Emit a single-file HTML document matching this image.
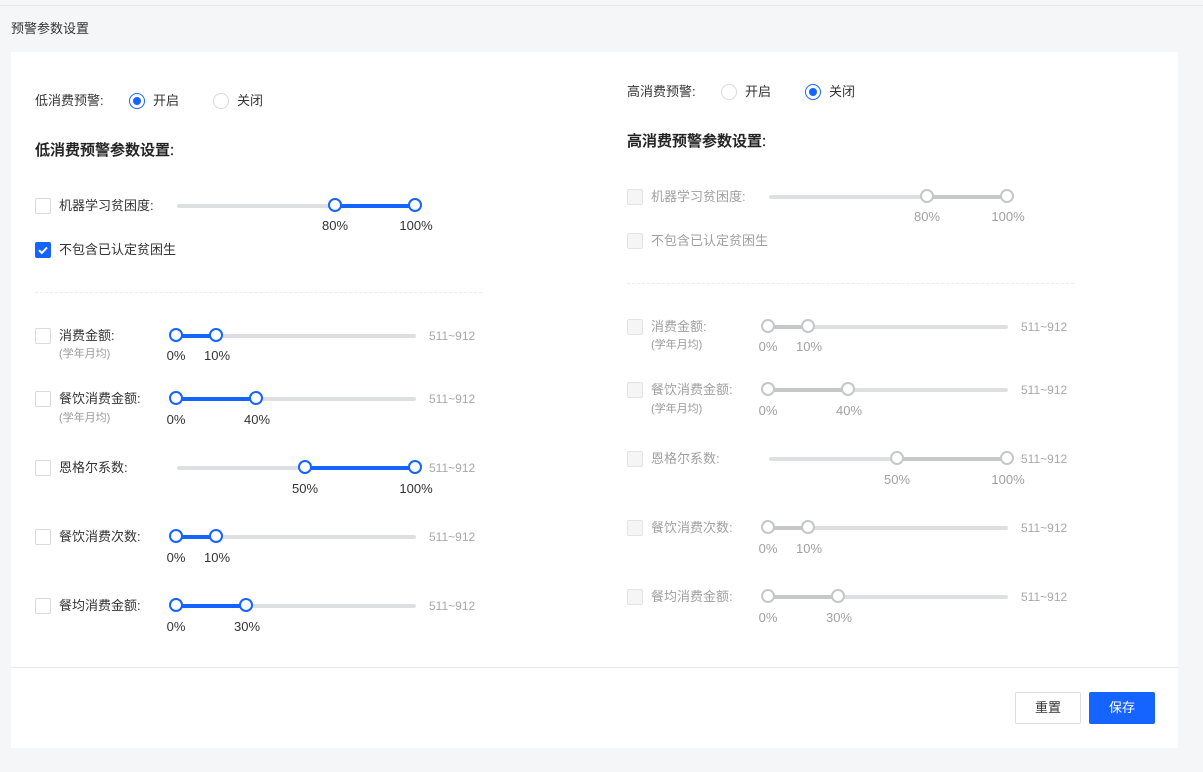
<!DOCTYPE html>
<html><head><meta charset="utf-8">
<style>
*{margin:0;padding:0;box-sizing:border-box}
body{width:1203px;height:772px;background:#f5f6f8;font-family:"Liberation Sans","Noto Sans CJK SC",sans-serif;position:relative;overflow:hidden;color:#333}
.a{position:absolute;white-space:nowrap}
.t{font-size:13px;line-height:18px}
.card{position:absolute;left:11px;top:52px;width:1167px;height:696px;background:#fff}
.tr{position:absolute;height:4px;border-radius:2px;background:#dedfe2}
.f{position:absolute;height:4px;background:#1664ff}
.th{position:absolute;width:14px;height:14px;margin-left:-1px;margin-top:-1px;border:2px solid #1664ff;border-radius:50%;background:#fff}
.p{position:absolute;width:60px;text-align:center;font-size:13px;line-height:16px;color:#333;margin-top:1px}
.cb{position:absolute;width:16px;height:16px;border:1px solid #d9d9d9;border-radius:2px;background:#fff}
.r .cb{background:#f5f5f5;border-color:#e3e3e3}
.r .f{background:#c6c7ca}
.r .th{border-color:#c6c7ca}
.r .p,.r .t{color:#a0a0a0}
.rng{position:absolute;font-size:12px;color:#a8a8a8;line-height:16px}
.sub{position:absolute;font-size:11px;color:#999;line-height:14px}
.rad{position:absolute;width:16px;height:16px;border-radius:50%;border:1px solid #d9d9d9;background:#fff}
.rad.on{border-color:#1664ff}
.rad.on:after{content:"";position:absolute;left:3px;top:3px;width:8px;height:8px;border-radius:50%;background:#1664ff}
.h{position:absolute;font-size:15px;font-weight:500;line-height:20px;color:#222;white-space:nowrap;-webkit-text-stroke:0.3px #222}
</style></head><body>
<div class="a" style="left:0;top:5px;width:1203px;height:1px;background:#e6e7ea"></div>
<div class="a t" style="left:11px;top:20px;color:#333">预警参数设置</div>
<div class="card"></div>
<div class="a" style="left:11px;top:667px;width:1167px;height:1px;background:#e8e9ec"></div>
<div class="a" style="left:1015px;top:692px;width:66px;height:32px;border:1px solid #dcdde0;border-radius:2px;background:#fff;font-size:13px;line-height:30px;text-align:center;color:#333">重置</div>
<div class="a" style="left:1089px;top:692px;width:66px;height:32px;border-radius:2px;background:#1664ff;font-size:13px;line-height:32px;text-align:center;color:#fff">保存</div>

<!-- LEFT -->
<div>
<div class="a t" style="left:35px;top:92px">低消费预警:</div>
<div class="rad on" style="left:129px;top:93px"></div>
<div class="a t" style="left:153px;top:92px">开启</div>
<div class="rad" style="left:213px;top:93px"></div>
<div class="a t" style="left:237px;top:92px">关闭</div>
<div class="h" style="left:35px;top:141px">低消费预警参数设置:</div>

<div class="cb" style="left:35px;top:198px"></div>
<div class="a t" style="left:59px;top:197px">机器学习贫困度:</div>
<div class="tr" style="left:177px;top:204px;width:239px"></div>
<div class="f" style="left:336px;top:204px;width:80px"></div>
<div class="th" style="left:329px;top:199px"></div><div class="th" style="left:409px;top:199px"></div>
<div class="p" style="left:305px;top:217px">80%</div><div class="p" style="left:386px;top:217px">100%</div>

<div class="cb" style="left:35px;top:242px;background:#1664ff;border-color:#1664ff"><svg width="14" height="14" viewBox="0 0 14 14" style="position:absolute;left:0;top:0"><path d="M3 7.2l2.8 2.8L11 4.5" stroke="#fff" stroke-width="2" fill="none"/></svg></div>
<div class="a t" style="left:59px;top:241px">不包含已认定贫困生</div>
<div class="a" style="left:35px;top:292px;width:447px;border-top:1px dashed #ececee"></div>

<div class="cb" style="left:35px;top:328px"></div>
<div class="a t" style="left:59px;top:327px">消费金额:</div>
<div class="sub" style="left:59px;top:347px">(学年月均)</div>
<div class="tr" style="left:177px;top:334px;width:239px"></div>
<div class="f" style="left:177px;top:334px;width:40px"></div>
<div class="th" style="left:170px;top:329px"></div><div class="th" style="left:210px;top:329px"></div>
<div class="p" style="left:146px;top:347px">0%</div><div class="p" style="left:187px;top:347px">10%</div>
<div class="rng" style="left:429px;top:328px">511~912</div>

<div class="cb" style="left:35px;top:391px"></div>
<div class="a t" style="left:59px;top:390px">餐饮消费金额:</div>
<div class="sub" style="left:59px;top:411px">(学年月均)</div>
<div class="tr" style="left:177px;top:397px;width:239px"></div>
<div class="f" style="left:177px;top:397px;width:80px"></div>
<div class="th" style="left:170px;top:392px"></div><div class="th" style="left:250px;top:392px"></div>
<div class="p" style="left:146px;top:411px">0%</div><div class="p" style="left:227px;top:411px">40%</div>
<div class="rng" style="left:429px;top:391px">511~912</div>

<div class="cb" style="left:35px;top:460px"></div>
<div class="a t" style="left:59px;top:459px">恩格尔系数:</div>
<div class="tr" style="left:177px;top:466px;width:239px"></div>
<div class="f" style="left:306px;top:466px;width:110px"></div>
<div class="th" style="left:299px;top:461px"></div><div class="th" style="left:409px;top:461px"></div>
<div class="p" style="left:275px;top:480px">50%</div><div class="p" style="left:386px;top:480px">100%</div>
<div class="rng" style="left:429px;top:460px">511~912</div>

<div class="cb" style="left:35px;top:529px"></div>
<div class="a t" style="left:59px;top:528px">餐饮消费次数:</div>
<div class="tr" style="left:177px;top:535px;width:239px"></div>
<div class="f" style="left:177px;top:535px;width:40px"></div>
<div class="th" style="left:170px;top:530px"></div><div class="th" style="left:210px;top:530px"></div>
<div class="p" style="left:146px;top:549px">0%</div><div class="p" style="left:187px;top:549px">10%</div>
<div class="rng" style="left:429px;top:529px">511~912</div>

<div class="cb" style="left:35px;top:598px"></div>
<div class="a t" style="left:59px;top:597px">餐均消费金额:</div>
<div class="tr" style="left:177px;top:604px;width:239px"></div>
<div class="f" style="left:177px;top:604px;width:70px"></div>
<div class="th" style="left:170px;top:599px"></div><div class="th" style="left:240px;top:599px"></div>
<div class="p" style="left:146px;top:618px">0%</div><div class="p" style="left:217px;top:618px">30%</div>
<div class="rng" style="left:429px;top:598px">511~912</div>
</div>

<!-- RIGHT -->
<div class="r" style="position:absolute;left:592px;top:-9px;width:1203px;height:772px">
<div class="a t" style="left:35px;top:92px;color:#333">高消费预警:</div>
<div class="rad" style="left:129px;top:93px"></div>
<div class="a t" style="left:153px;top:92px;color:#333">开启</div>
<div class="rad on" style="left:213px;top:93px"></div>
<div class="a t" style="left:237px;top:92px;color:#333">关闭</div>
<div class="h" style="left:35px;top:141px">高消费预警参数设置:</div>

<div class="cb" style="left:35px;top:198px"></div>
<div class="a t" style="left:59px;top:197px">机器学习贫困度:</div>
<div class="tr" style="left:177px;top:204px;width:239px"></div>
<div class="f" style="left:336px;top:204px;width:80px"></div>
<div class="th" style="left:329px;top:199px"></div><div class="th" style="left:409px;top:199px"></div>
<div class="p" style="left:305px;top:217px">80%</div><div class="p" style="left:386px;top:217px">100%</div>

<div class="cb" style="left:35px;top:242px"></div>
<div class="a t" style="left:59px;top:241px">不包含已认定贫困生</div>
<div class="a" style="left:35px;top:292px;width:447px;border-top:1px dashed #ececee"></div>

<div class="cb" style="left:35px;top:328px"></div>
<div class="a t" style="left:59px;top:327px">消费金额:</div>
<div class="sub" style="left:59px;top:347px">(学年月均)</div>
<div class="tr" style="left:177px;top:334px;width:239px"></div>
<div class="f" style="left:177px;top:334px;width:40px"></div>
<div class="th" style="left:170px;top:329px"></div><div class="th" style="left:210px;top:329px"></div>
<div class="p" style="left:146px;top:347px">0%</div><div class="p" style="left:187px;top:347px">10%</div>
<div class="rng" style="left:429px;top:328px">511~912</div>

<div class="cb" style="left:35px;top:391px"></div>
<div class="a t" style="left:59px;top:390px">餐饮消费金额:</div>
<div class="sub" style="left:59px;top:411px">(学年月均)</div>
<div class="tr" style="left:177px;top:397px;width:239px"></div>
<div class="f" style="left:177px;top:397px;width:80px"></div>
<div class="th" style="left:170px;top:392px"></div><div class="th" style="left:250px;top:392px"></div>
<div class="p" style="left:146px;top:411px">0%</div><div class="p" style="left:227px;top:411px">40%</div>
<div class="rng" style="left:429px;top:391px">511~912</div>

<div class="cb" style="left:35px;top:460px"></div>
<div class="a t" style="left:59px;top:459px">恩格尔系数:</div>
<div class="tr" style="left:177px;top:466px;width:239px"></div>
<div class="f" style="left:306px;top:466px;width:110px"></div>
<div class="th" style="left:299px;top:461px"></div><div class="th" style="left:409px;top:461px"></div>
<div class="p" style="left:275px;top:480px">50%</div><div class="p" style="left:386px;top:480px">100%</div>
<div class="rng" style="left:429px;top:460px">511~912</div>

<div class="cb" style="left:35px;top:529px"></div>
<div class="a t" style="left:59px;top:528px">餐饮消费次数:</div>
<div class="tr" style="left:177px;top:535px;width:239px"></div>
<div class="f" style="left:177px;top:535px;width:40px"></div>
<div class="th" style="left:170px;top:530px"></div><div class="th" style="left:210px;top:530px"></div>
<div class="p" style="left:146px;top:549px">0%</div><div class="p" style="left:187px;top:549px">10%</div>
<div class="rng" style="left:429px;top:529px">511~912</div>

<div class="cb" style="left:35px;top:598px"></div>
<div class="a t" style="left:59px;top:597px">餐均消费金额:</div>
<div class="tr" style="left:177px;top:604px;width:239px"></div>
<div class="f" style="left:177px;top:604px;width:70px"></div>
<div class="th" style="left:170px;top:599px"></div><div class="th" style="left:240px;top:599px"></div>
<div class="p" style="left:146px;top:618px">0%</div><div class="p" style="left:217px;top:618px">30%</div>
<div class="rng" style="left:429px;top:598px">511~912</div>
</div>
</body></html>
